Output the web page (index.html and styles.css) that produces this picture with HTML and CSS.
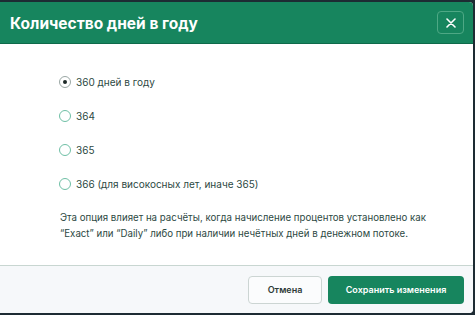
FILE: index.html
```html
<!DOCTYPE html>
<html lang="ru">
<head>
<meta charset="UTF-8">
<title>Количество дней в году</title>
<link rel="stylesheet" href="styles.css">
</head>
<body>
    <div class="dialog">
        <div class="dialog-header">
            <h1 class="dialog-title">Количество дней в году</h1>
            <button class="close-btn" aria-label="Закрыть">
                <svg width="10" height="10" viewBox="0 0 10 10"><path d="M1 1L9 9M9 1L1 9" stroke="#fff" stroke-width="1.6" stroke-linecap="round"/></svg>
            </button>
        </div>

        <div class="dialog-body">
            <div class="options">
                <label class="option"><span class="radio checked"></span>360 дней в году</label>
                <label class="option"><span class="radio"></span>364</label>
                <label class="option"><span class="radio"></span>365</label>
                <label class="option"><span class="radio"></span>366 (для високосных лет, иначе 365)</label>
            </div>
            <p class="note">Эта опция влияет на расчёты, когда начисление процентов установлено как “Exact” или “Daily” либо при наличии нечётных дней в денежном потоке.</p>
        </div>

        <div class="dialog-footer">
            <button class="btn btn-cancel">Отмена</button>
            <button class="btn btn-save">Сохранить изменения</button>
        </div>
    </div>
</body>
</html>
```

FILE: styles.css
```css
body, html {
    margin: 0;
    padding: 0;
    height: 100%;
    overflow: hidden;
    background: #1d2b33;
    font-family: Inter, "Noto Sans", sans-serif;
}
.dialog {
    margin: 2px 2px 2px 0;
    height: 311px;
    background: #fff;
    border-radius: 0 4px 4px 0;
    display: flex;
    flex-direction: column;
    overflow: hidden;
}
.dialog-header {
    background: #17855e;
    height: 40px;
    display: flex;
    align-items: center;
    justify-content: space-between;
    padding: 1px 9px 0 10px;
    border-bottom: 1px solid #0f6a4a;
}
.dialog-title {
    margin: 0;
    color: #fff;
    font-size: 15.5px;
    font-weight: 700;
}
.close-btn {
    width: 27px;
    height: 23px;
    margin-top: -1px;
    background: transparent;
    border: 1px solid #4ea885;
    border-radius: 4px;
    display: flex;
    align-items: center;
    justify-content: center;
    padding: 0;
}
.dialog-body {
    flex: 1;
    padding: 31px 20px 0 59px;
    color: #2d4943;
}
.options {
    display: flex;
    flex-direction: column;
    gap: 20px;
}
.option {
    display: flex;
    align-items: center;
    gap: 5px;
    font-size: 10px;
    height: 14px;
}
.radio {
    width: 10px;
    height: 10px;
    border: 1px solid #6ebfa5;
    border-radius: 50%;
    display: flex;
    align-items: center;
    justify-content: center;
}
.radio.checked {
    border-color: #9aa7a4;
}
.radio.checked::after {
    content: "";
    width: 4px;
    height: 4px;
    border-radius: 50%;
    background: #1e2a28;
}
.note {
    margin: 19px 0 0 1px;
    font-size: 9.7px;
    line-height: 16px;
}
.dialog-footer {
    height: 47px;
    background: #f6f8fa;
    border-top: 1px solid #c8d6d1;
    display: flex;
    align-items: center;
    justify-content: flex-end;
    gap: 6px;
    padding: 0 9px;
}
.btn {
    height: 28px;
    border-radius: 4px;
    font-family: Inter, "Noto Sans", sans-serif;
    font-size: 9px;
    font-weight: 600;
    cursor: pointer;
}
.btn-cancel {
    width: 74px;
    background: #fbfcfd;
    border: 1px solid #ccd5d3;
    color: #2f3b39;
}
.btn-save {
    width: 136px;
    background: #17855e;
    border: none;
    color: #fff;
}
```
